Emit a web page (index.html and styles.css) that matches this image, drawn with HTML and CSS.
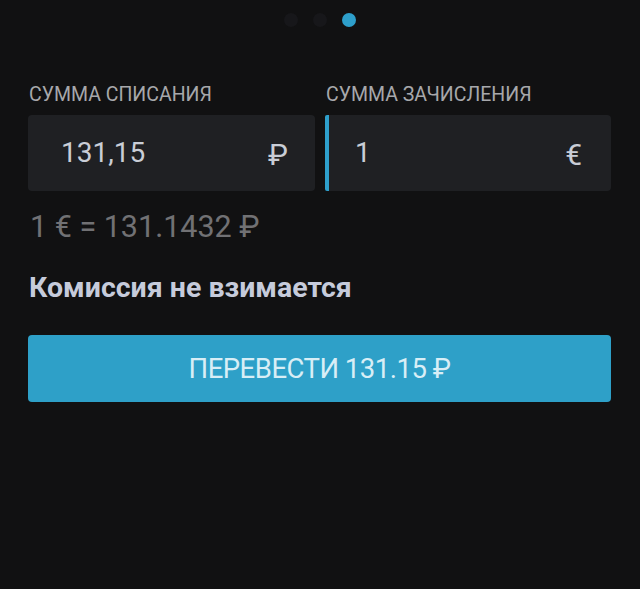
FILE: index.html
```html
<!DOCTYPE html>
<html lang="ru">
<head>
<meta charset="utf-8">
<link rel="stylesheet" href="styles.css">
</head>
<body>
<div class="screen">
  <div class="dots">
    <span class="dot"></span>
    <span class="dot"></span>
    <span class="dot active"></span>
  </div>
  <div class="fields">
    <div class="field">
      <div class="label">СУММА СПИСАНИЯ</div>
      <div class="box">
        <span class="value">131,15</span>
        <span class="cur">₽</span>
      </div>
    </div>
    <div class="field">
      <div class="label">СУММА ЗАЧИСЛЕНИЯ</div>
      <div class="box focused">
        <span class="value">1</span>
        <span class="cur">€</span>
      </div>
    </div>
  </div>
  <div class="rate">1 € = 131.1432 ₽</div>
  <div class="fee">Комиссия не взимается</div>
  <button class="submit">ПЕРЕВЕСТИ 131.15 ₽</button>
</div>
</body>
</html>
```
FILE: styles.css
```css
html, body {
  margin: 0;
  padding: 0;
  background: #111112;
  height: 100%;
}
body {
  font-family: Roboto, "Noto Sans", sans-serif;
}
.screen {
  padding: 13px 29px 0 28px;
}
.dots {
  display: flex;
  justify-content: center;
  gap: 15px;
  height: 14px;
}
.dot {
  width: 14px;
  height: 14px;
  border-radius: 50%;
  background: #17171a;
}
.dot.active {
  background: #2e9fcb;
}
.fields {
  display: grid;
  grid-template-columns: 287px 1fr;
  column-gap: 10px;
  margin-top: 57px;
}
.label {
  color: #a7a8ab;
  font-size: 19.5px;
  line-height: 22px;
  padding-left: 1px;
  margin-bottom: 9px;
}
.box {
  height: 76px;
  background: #1f2023;
  border-radius: 4px;
  display: flex;
  align-items: center;
  justify-content: space-between;
  padding: 0 27px 0 33px;
  box-sizing: border-box;
}
.box.focused {
  border-left: 4px solid #2e9fcb;
  border-radius: 2px 4px 4px 2px;
  padding: 0 29px 0 26px;
}
.value {
  color: #c9cdd6;
  font-size: 28px;
  margin-top: -1px;
}
.cur {
  color: #c9cdd6;
  font-size: 30px;
  margin-top: 3px;
}
.rate {
  color: #717174;
  font-size: 30.5px;
  line-height: 36px;
  margin-top: 18px;
  padding-left: 2px;
}
.fee {
  color: #c6cbdb;
  font-size: 28.5px;
  font-weight: 700;
  line-height: 34px;
  margin-top: 26px;
  padding-left: 1px;
}
.submit {
  display: block;
  width: 100%;
  height: 67px;
  margin-top: 30px;
  border: none;
  border-radius: 4px;
  background: #2ea0c8;
  color: #d8eef6;
  font-family: Roboto, "Noto Sans", sans-serif;
  font-size: 27.5px;
  letter-spacing: -0.5px;
  padding: 0;
}
```
